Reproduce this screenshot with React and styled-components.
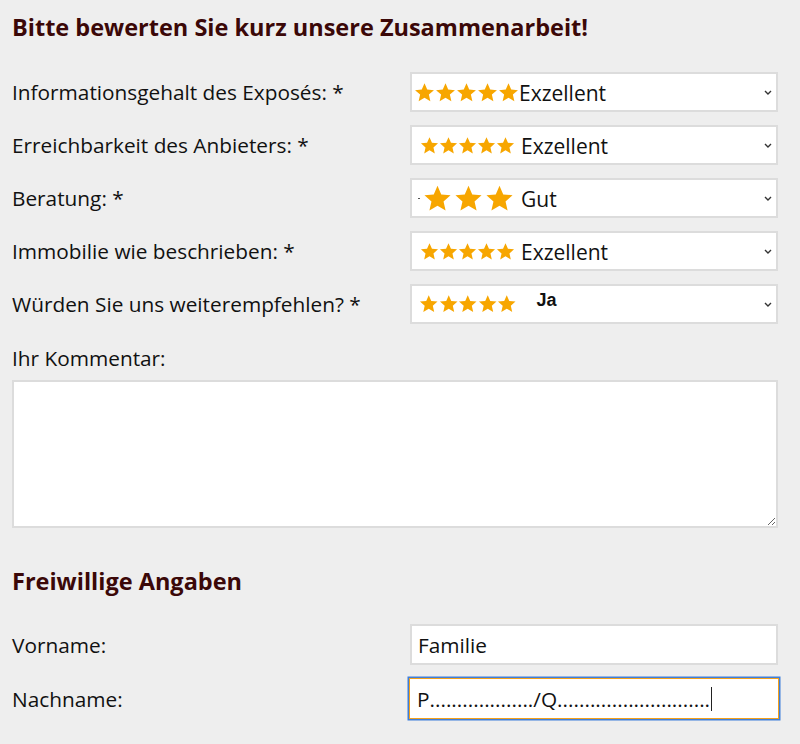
import React from "react";
import styled, { createGlobalStyle } from "styled-components";

const GlobalStyle = createGlobalStyle`
 body {
  margin: 0;
  background: #eeeeee;
  font-family: "Open Sans", "Noto Sans", sans-serif;
  color: #111;
 }
`;

const ratings = [
 { label: "Informationsgehalt des Exposés: *", stars: 5, size: 21, gap: 0, offset: 2, text: "Exzellent", textGap: 0 },
 { label: "Erreichbarkeit des Anbieters: *", stars: 5, size: 19, gap: 0, offset: 8, text: "Exzellent", textGap: 6 },
 { label: "Beratung: *", stars: 3, size: 29, gap: 2, offset: 6, text: "Gut", textGap: 7, dot: true },
 { label: "Immobilie wie beschrieben: *", stars: 5, size: 19, gap: 0, offset: 8, text: "Exzellent", textGap: 6 },
 { label: "Würden Sie uns weiterempfehlen? *", stars: 5, size: 19.5, gap: 0, offset: 7, text: "Ja", textGap: 20, bold: true },
];

const Star = ({ size }) => (
 <svg width={size} height={size} viewBox="0 0 24 24">
  <path
   d="M12 1.5l3.1 7.1 7.7.7-5.8 5.1 1.7 7.6L12 18l-6.7 4 1.7-7.6-5.8-5.1 7.7-.7z"
   fill="#f7a600"
  />
 </svg>
);

const Chevron = () => (
 <svg width="8" height="5" viewBox="0 0 8 5">
  <path d="M1 1l3 3 3-3" stroke="#333" strokeWidth="1.4" fill="none" />
 </svg>
);

const App = () => {
 return (
  <>
   <GlobalStyle />
   <Page>
    <Heading>Bitte bewerten Sie kurz unsere Zusammenarbeit!</Heading>
    <Rows>
     {ratings.map((r) => (
      <Row key={r.label}>
       <Label>{r.label}</Label>
       <SelectBox>
        <StarRow $offset={r.offset} $gap={r.gap}>
         {r.dot && <Dot />}
         {Array.from({ length: r.stars }).map((_, i) => (
          <Star key={i} size={r.size} />
         ))}
        </StarRow>
        <OptionText $bold={r.bold} $gap={r.textGap}>
         {r.text}
        </OptionText>
        <ChevronWrap>
         <Chevron />
        </ChevronWrap>
       </SelectBox>
      </Row>
     ))}
    </Rows>
    <CommentLabel>Ihr Kommentar:</CommentLabel>
    <Comment />
    <SubHeading>Freiwillige Angaben</SubHeading>
    <Rows>
     <Row $tall>
      <Label>Vorname:</Label>
      <TextInput readOnly value="Familie" />
     </Row>
     <Row $tall>
      <Label>Nachname:</Label>
      <FocusedField>
       <FieldText>P.................../Q............................</FieldText>
       <Caret />
      </FocusedField>
     </Row>
    </Rows>
   </Page>
  </>
 );
};

const Page = styled.div`
 padding: 12px 22px 20px 12px;
 width: 766px;
`;

const Heading = styled.h1`
 margin: 0 0 30px;
 font-size: 23.5px;
 line-height: 30px;
 font-weight: 700;
 color: #3b0808;
`;

const SubHeading = styled.h2`
 margin: 38px 0 28px;
 font-size: 23.5px;
 line-height: 30px;
 font-weight: 700;
 color: #3b0808;
`;

const Rows = styled.div`
 display: flex;
 flex-direction: column;
 gap: 13px;
`;

const Row = styled.div`
 display: flex;
 align-items: center;
 height: ${(p) => (p.$tall ? "41px" : "40px")};
`;

const Label = styled.div`
 width: 398px;
 font-size: 20.8px;
`;

const SelectBox = styled.div`
 flex: 1;
 height: 40px;
 box-sizing: border-box;
 background: #fff;
 border: 2px solid #dcdcdc;
 display: flex;
 align-items: center;
`;

const StarRow = styled.div`
 display: flex;
 align-items: center;
 gap: ${(p) => p.$gap}px;
 padding-left: ${(p) => p.$offset}px;
`;

const Dot = styled.span`
 width: 2px;
 height: 1px;
 background: #555;
 margin-right: 1px;
`;

const OptionText = styled.span`
 margin-left: ${(p) => p.$gap}px;
 font-size: ${(p) => (p.$bold ? "18px" : "21px")};
 font-family: ${(p) => (p.$bold ? '"Liberation Sans", Arial, sans-serif' : "inherit")};
 font-weight: ${(p) => (p.$bold ? 700 : 400)};
 position: relative;
 top: ${(p) => (p.$bold ? "-4px" : "1px")};
`;

const ChevronWrap = styled.span`
 margin-left: auto;
 margin-right: 4px;
 display: flex;
`;

const CommentLabel = styled.div`
 margin-top: 22px;
 font-size: 20.8px;
 line-height: 24px;
`;

const Comment = styled.textarea`
 display: block;
 margin-top: 10px;
 width: 766px;
 height: 148px;
 box-sizing: border-box;
 border: 2px solid #dcdcdc;
 background: #fff;
 resize: both;
 font-family: inherit;
 outline: none;
`;

const TextInput = styled.input`
 flex: 1;
 height: 41px;
 box-sizing: border-box;
 background: #fff;
 border: 2px solid #dcdcdc;
 padding: 0 6px;
 font-family: "Open Sans", "Noto Sans", sans-serif;
 font-size: 20.8px;
 color: #111;
 outline: none;
`;

const FocusedField = styled.div`
 flex: 1;
 height: 41px;
 box-sizing: border-box;
 background: #fff;
 border: 1px solid #f2a01c;
 box-shadow: 0 0 0 1.5px #3f7fd9;
 padding: 0 7px;
 display: flex;
 align-items: center;
 margin-left: -1px;
 margin-right: -1px;
`;

const FieldText = styled.span`
 font-size: 20.8px;
 color: #111;
 white-space: nowrap;
`;

const Caret = styled.span`
 width: 1px;
 height: 24px;
 background: #222;
 margin-left: 1px;
`;

export default App;
